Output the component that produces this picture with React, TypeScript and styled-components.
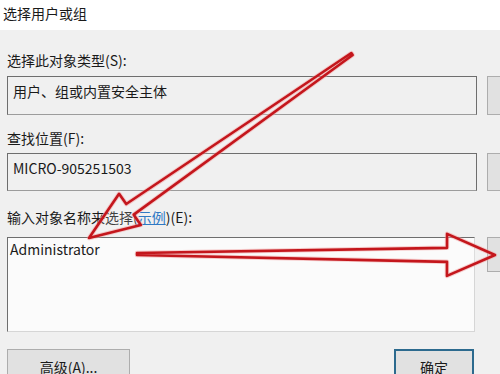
import * as React from "react";
import styled, { createGlobalStyle } from "styled-components";

const GlobalStyle = createGlobalStyle`
  html, body {
    margin: 0;
    padding: 0;
  }
  body {
    width: 500px;
    height: 374px;
    overflow: hidden;
    background: #f0f0f0;
    font-family: "Noto Sans CJK SC", "Microsoft YaHei", sans-serif;
    color: #1a1a1a;
  }
`;

const Page = styled.div`
  position: relative;
  width: 500px;
  height: 374px;
  overflow: hidden;
  display: flex;
  flex-direction: column;
`;

const TitleBar = styled.div`
  height: 30px;
  flex-shrink: 0;
  background: #ffffff;
  padding: 3px 0 0 3px;
  box-sizing: border-box;
  font-size: 14px;
  line-height: 20px;
`;

const Body = styled.div`
  flex: 1 0 auto;
  background: #f0f0f0;
  padding: 20px 0 0 7px;
  display: flex;
  flex-direction: column;
`;

const Label = styled.div<{ $top: number; $bottom: number }>`
  margin-top: ${(p) => p.$top}px;
  margin-bottom: ${(p) => p.$bottom}px;
  font-size: 14px;
  line-height: 20px;
  height: 20px;
  flex-shrink: 0;
`;

const LinkText = styled.span`
  color: #2f79c4;
  text-decoration: underline;
`;

const Row = styled.div`
  display: flex;
  align-items: flex-start;
  gap: 10px;
  flex-shrink: 0;
`;

const Field = styled.div<{ $h: number; $w: number; $white?: boolean }>`
  width: ${(p) => p.$w}px;
  height: ${(p) => p.$h}px;
  box-sizing: border-box;
  flex-shrink: 0;
  background: ${(p) => (p.$white ? "#fbfbfb" : "#f0f0f0")};
  border: 1px solid #6e6e6e;
  border-bottom-color: ${(p) => (p.$white ? "#d6d6d6" : "#9c9c9c")};
  border-right-color: ${(p) => (p.$white ? "#d6d6d6" : "#6e6e6e")};
  padding: ${(p) => (p.$white ? "1px 0 0 2px" : "4px 0 0 5px")};
  font-size: 14px;
  line-height: 20px;
`;

const SideButton = styled.div<{ $h: number; $shift?: number }>`
  width: 80px;
  height: ${(p) => p.$h}px;
  margin-left: ${(p) => p.$shift ?? 0}px;
  flex-shrink: 0;
  box-sizing: border-box;
  background: #e1e1e1;
  border: 1px solid #adadad;
`;

const Footer = styled.div`
  margin-top: 17px;
  display: flex;
  justify-content: space-between;
  width: 467px;
  flex-shrink: 0;
`;

const Button = styled.div<{ $w: number; $focused?: boolean }>`
  width: ${(p) => p.$w}px;
  height: 36px;
  box-sizing: border-box;
  background: #e1e1e1;
  border: ${(p) => (p.$focused ? "2px solid #2c6a8e" : "1px solid #adadad")};
  display: flex;
  justify-content: center;
  padding-top: ${(p) => (p.$focused ? 6 : 7)}px;
  font-size: 14px;
  line-height: 20px;
  flex-shrink: 0;
`;

const Overlay = styled.svg`
  position: absolute;
  left: 0;
  top: 0;
  width: 500px;
  height: 374px;
  pointer-events: none;
`;

interface ArrowProps {
  x1: number;
  y1: number;
  x2: number;
  y2: number;
  tail: number;
  shaft: number;
  head: number;
  headLen: number;
}

// hollow tapered arrow, drawn along +x then rotated into place
const Arrow = ({ x1, y1, x2, y2, tail, shaft, head, headLen }: ArrowProps) => {
  const dx = x2 - x1;
  const dy = y2 - y1;
  const len = Math.sqrt(dx * dx + dy * dy);
  const angle = (Math.atan2(dy, dx) * 180) / Math.PI;
  const b = len - headLen;
  const pts = [
    [0, -tail],
    [b, -shaft],
    [b, -head],
    [len, 0],
    [b, head],
    [b, shaft],
    [0, tail],
  ]
    .map((p) => p.join(","))
    .join(" ");
  return (
    <g transform={`translate(${x1} ${y1}) rotate(${angle})`}>
      <polygon
        points={pts}
        fill="rgba(255,255,255,0.35)"
        stroke="#f3a0a0"
        strokeWidth={4.5}
        strokeLinejoin="round"
        opacity={0.5}
      />
      <polygon
        points={pts}
        fill="none"
        stroke="#c4161c"
        strokeWidth={2.6}
        strokeLinejoin="round"
      />
    </g>
  );
};

export default function App() {
  return (
    <Page>
      <GlobalStyle />
      <TitleBar>选择用户或组</TitleBar>
      <Body>
        <Label $top={0} $bottom={6}>选择此对象类型(S):</Label>
        <Row>
          <Field $w={470} $h={39}>用户、组或内置安全主体</Field>
          <SideButton $h={39} />
        </Row>
        <Label $top={13} $bottom={5}>查找位置(F):</Label>
        <Row>
          <Field $w={470} $h={38}>MICRO-905251503</Field>
          <SideButton $h={38} />
        </Row>
        <Label $top={16} $bottom={10}>
          输入对象名称来选择(<LinkText>示例</LinkText>)(E):
        </Label>
        <Row>
          <Field $w={468} $h={95} $white>Administrator</Field>
          <SideButton $h={35} $shift={2} />
        </Row>
        <Footer>
          <Button $w={123}>高级(A)...</Button>
          <Button $w={80} $focused>确定</Button>
        </Footer>
      </Body>
      <Overlay viewBox="0 0 500 374">
        <Arrow x1={352} y1={54} x2={89} y2={238} tail={1.2} shaft={6.5} head={19} headLen={50} />
        <Arrow x1={137} y1={254} x2={495} y2={255} tail={1} shaft={7} head={21} headLen={48} />
      </Overlay>
    </Page>
  );
}
